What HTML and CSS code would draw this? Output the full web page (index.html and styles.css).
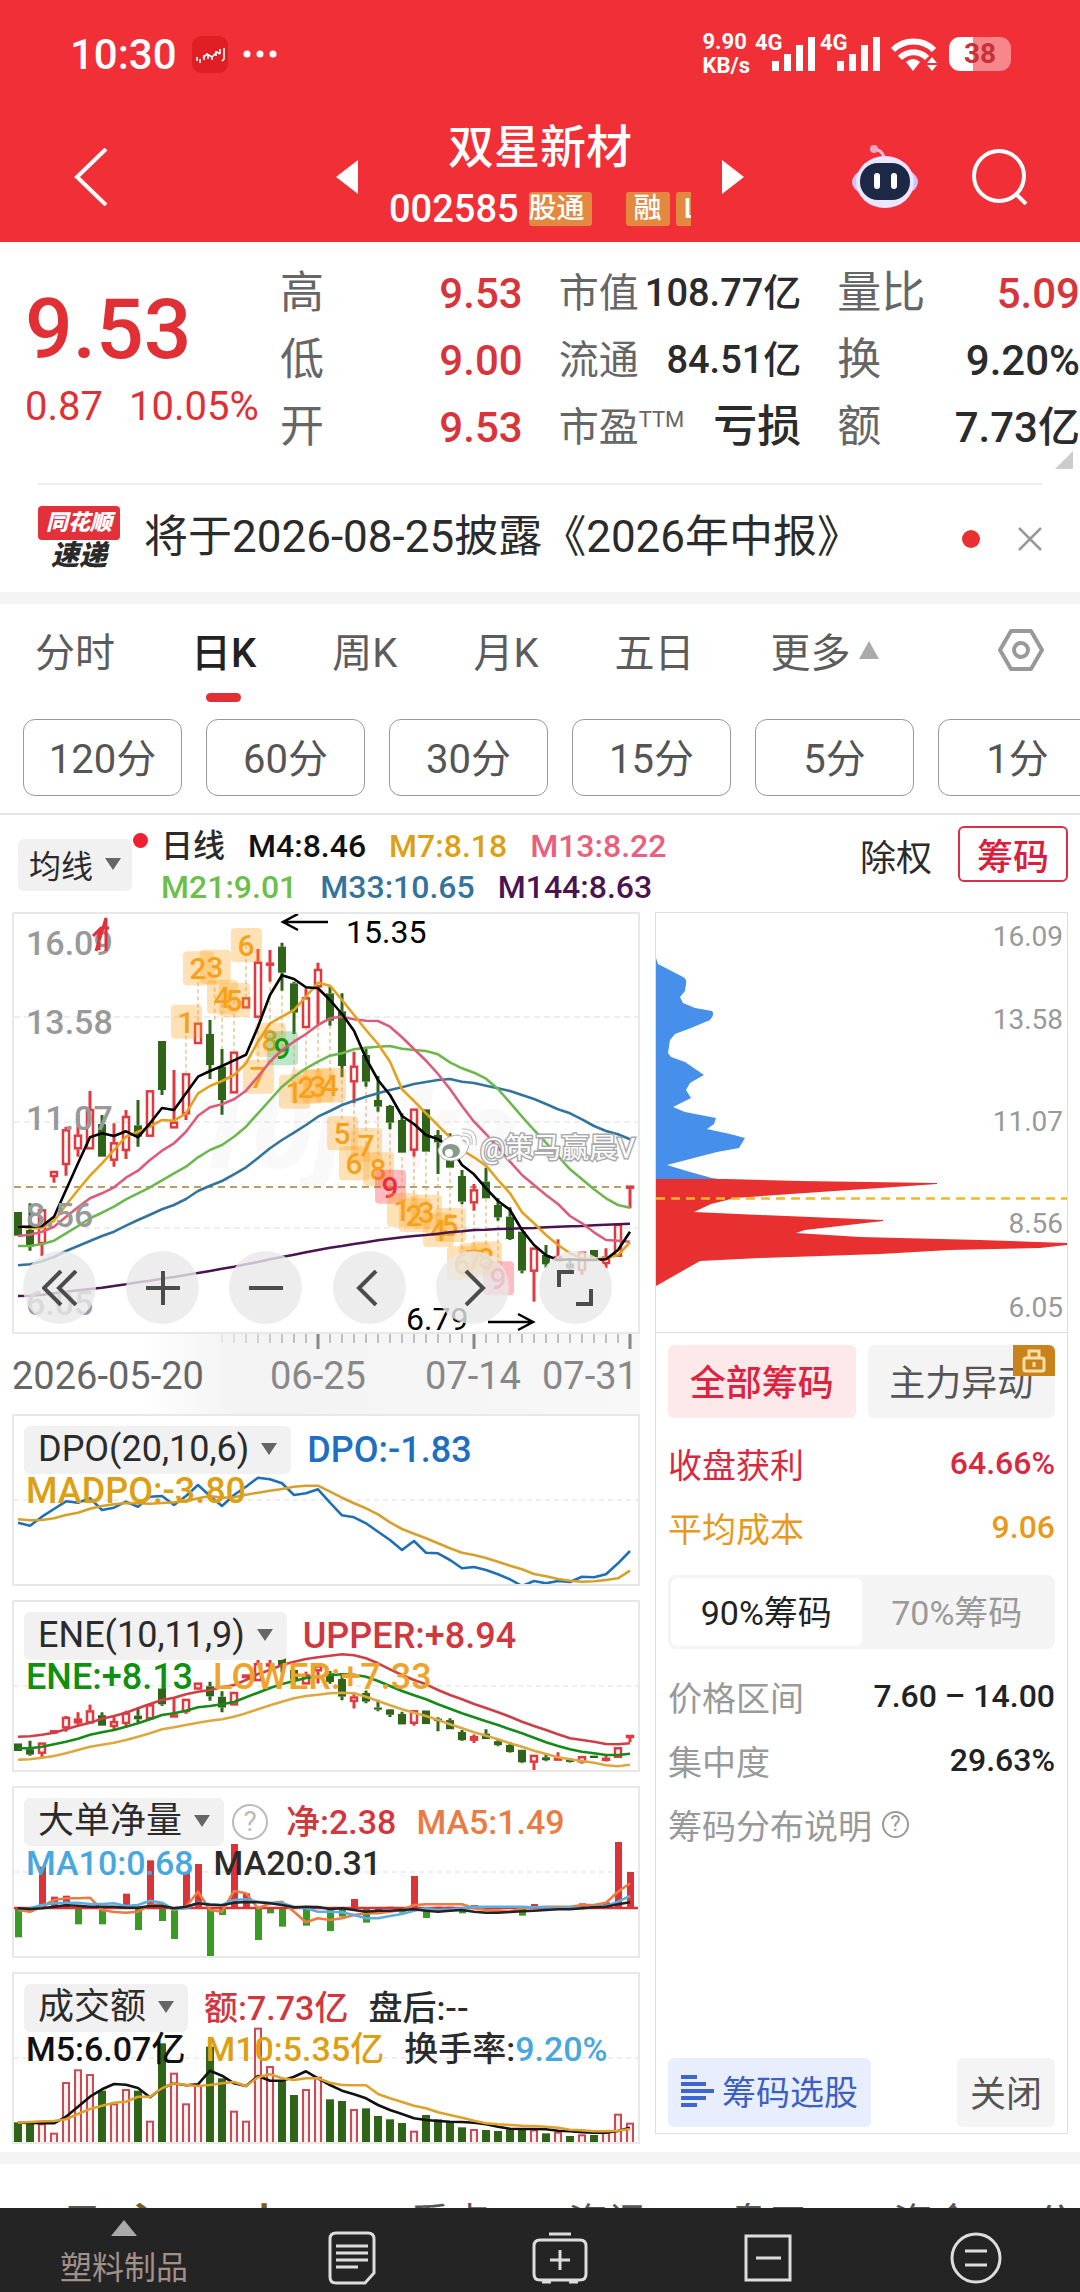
FILE: index.html
```html
<!DOCTYPE html>
<html lang="zh-CN">
<head>
<meta charset="utf-8">
<meta name="viewport" content="width=device-width, initial-scale=1">
<title>双星新材 002585</title>
<link rel="stylesheet" href="styles.css">
</head>
<body>
<header class="top">
  <div class="status">
    <div class="status-side">
      <span class="clock">10:30</span>
      <svg class="app" width="36" height="37" viewBox="0 0 36 37"><rect width="36" height="37" rx="9" fill="#df1f24"/><path d="M5 25v-4M8 27v-4M12 24v-5M16 19v4M20 24v-4M24 20v-5M28 18v-5M32 12v11l-2 2M11 22l4-4 5 3 5-5 3 2" fill="none" stroke="#fff" stroke-width="1.6"/></svg>
      <svg width="34" height="8" viewBox="0 0 34 8" fill="#fff"><circle cx="4" cy="4" r="3.500"/><circle cx="17" cy="4" r="3.500"/><circle cx="30" cy="4" r="3.500"/></svg>
    </div>
    <div class="status-side">
      <span class="speed">9.90<br>KB/s</span>
      <span class="signal"><span>4G</span><svg width="43" height="34" viewBox="0 0 43 34" fill="#fff"><path d="M0 24h7v10H0zM12 17h7v17h-7zM24 8h7v26h-7zM36 0h7v34h-7z"/></svg></span>
      <span class="signal"><span>4G</span><svg width="43" height="34" viewBox="0 0 43 34" fill="#fff"><path d="M0 24h7v10H0zM12 17h7v17h-7zM24 8h7v26h-7zM36 0h7v34h-7z"/></svg></span>
      <svg width="47" height="34" viewBox="0 0 47 34" fill="none" stroke="#fff" stroke-width="6"><path d="M2 13a29 29 0 0 1 41 0M9 21a19 19 0 0 1 27 0"/><path d="M15 25q7-6 14 0l-7 9z" fill="#fff" stroke="none"/><path d="M36 26l5-6 5 6zM36 28l5 6 5-6z" fill="#fff" stroke="none"/></svg>
      <span class="battery">38</span>
    </div>
  </div>
  <div class="titlebar">
    <button class="plain back" aria-label="返回"><svg width="34" height="58" viewBox="0 0 34 58" fill="none" stroke="#fff" stroke-width="4"><path d="M32 1L3 29l29 28"/></svg></button>
    <div class="stock">
      <button class="plain" aria-label="上一只"><svg width="22" height="34" viewBox="0 0 22 34"><path d="M22 0v34L0 17z" fill="#fff"/></svg></button>
      <div class="stock-mid">
        <h1>双星新材</h1>
        <div class="code"><span>002585</span><span class="marks"><b>股通</b><b class="apart">融</b><b>L1</b></span></div>
      </div>
      <button class="plain" aria-label="下一只"><svg width="22" height="34" viewBox="0 0 22 34"><path d="M0 0v34l22-17z" fill="#fff"/></svg></button>
    </div>
    <div class="tools">
      <button class="plain" aria-label="助手"><svg width="68" height="64" viewBox="0 0 68 64"><path d="M33 12Q31 5 23 4" fill="none" stroke="#f3b8d4" stroke-width="3"/><circle cx="23" cy="4" r="4" fill="#f0a8c4"/><ellipse cx="34" cy="37" rx="33" ry="17" fill="#cfc4f8"/><ellipse cx="34" cy="37" rx="29" ry="26" fill="#ece6ff"/><rect x="9" y="18" width="50" height="37" rx="18" fill="#1d2846"/><path d="M26 31v10M43 31v10" stroke="#fff" stroke-width="6" stroke-linecap="round"/></svg></button>
      <button class="plain" aria-label="搜索"><svg width="56" height="56" viewBox="0 0 56 56" fill="none" stroke="#fff" stroke-width="4"><circle cx="27" cy="27" r="25"/><path d="M44 45l10 10"/></svg></button>
    </div>
  </div>
</header>

<section class="quote">
  <div class="price"><strong>9.53</strong><p><span>0.87</span><span>10.05%</span></p></div>
  <dl>
    <div><dt>高</dt><dd class="red">9.53</dd></div>
    <div><dt>低</dt><dd class="red">9.00</dd></div>
    <div><dt>开</dt><dd class="red">9.53</dd></div>
  </dl>
  <dl class="tight">
    <div><dt>市值</dt><dd>108.77亿</dd></div>
    <div><dt>流通</dt><dd>84.51亿</dd></div>
    <div><dt>市盈<sup>TTM</sup></dt><dd class="strong">亏损</dd></div>
  </dl>
  <dl>
    <div><dt>量比</dt><dd class="red">5.09</dd></div>
    <div><dt>换</dt><dd>9.20%</dd></div>
    <div><dt>额</dt><dd>7.73亿</dd></div>
  </dl>
  <svg class="corner" width="18" height="18" viewBox="0 0 18 18"><path d="M18 0v18H0z" fill="#ccc"/></svg>
</section>

<section class="notice">
  <div class="express"><span class="bubble">同花顺</span><span class="sudi">速递</span></div>
  <a href="#report">将于2026-08-25披露《2026年中报》</a>
  <i class="dot"></i>
  <button class="plain" aria-label="关闭公告"><svg width="24" height="24" viewBox="0 0 24 24" stroke="#999" stroke-width="2.5"><path d="M1 1l22 22M23 1L1 23"/></svg></button>
</section>

<nav class="tabs">
  <button class="plain">分时</button>
  <button class="plain on">日K</button>
  <button class="plain">周K</button>
  <button class="plain">月K</button>
  <button class="plain">五日</button>
  <button class="plain more">更多<svg width="20" height="18" viewBox="0 0 20 18"><path d="M10 0l10 18H0z" fill="#aaa"/></svg></button>
  <button class="plain gear" aria-label="设置"><svg width="46" height="42" viewBox="0 0 46 42" fill="none" stroke="#999" stroke-width="4"><path d="M13 2h20l11 19-11 19H13L2 21z" stroke-linejoin="round"/><circle cx="23" cy="21" r="7"/></svg></button>
</nav>
<div class="periods">
  <button>120分</button><button>60分</button><button>30分</button><button>15分</button><button>5分</button><button>1分</button>
</div>

<section class="legendbar">
  <button class="pick small">均线<svg width="16" height="12" viewBox="0 0 16 12"><path d="M0 0h16L8 12z" fill="#666"/></svg><i class="pip"></i></button>
  <div class="legend">
    <p><span class="c-dark">日线</span><span class="c-black">M4:8.46</span><span class="c-gold">M7:8.18</span><span class="c-pink">M13:8.22</span></p>
    <p><span class="c-lime">M21:9.01</span><span class="c-teal">M33:10.65</span><span class="c-plum">M144:8.63</span></p>
  </div>
  <button class="plain right">除权</button>
  <button class="chip">筹码</button>
</section>

<main class="work">
  <div class="left">
    <div class="kline">
      <svg id="kline" viewBox="14 914 624 418">
        <g fill="#f9f9f9" class="ghost"><text x="190" y="1168">10jqka</text></g>
        <g stroke="#ddd" stroke-dasharray="6 4"><path d="M14 1017H638M14 1122H638M14 1228H638"/></g>
        <path d="M14 1187H638" stroke="#b5a06a" stroke-width="2" stroke-dasharray="7 5"/>
        <g id="kdata"></g>
        <g class="axis"><text x="26" y="955">16.09</text><text x="26" y="1034">13.58</text><text x="26" y="1130">11.07</text><text x="26" y="1227">8.56</text><text x="26" y="1315">6.05</text></g>
        <path d="M96 951L106 918V951M93 936l8-8 8 0M99 930v20" fill="none" stroke="#e0303c" stroke-width="3"/>
        <g class="extreme"><text x="346" y="943">15.35</text><text x="406" y="1330">6.79</text></g>
        <path d="M328 922H283m15-8l-15 8 15 8M488 1322h45m-15-8l15 8-15 8" fill="none" stroke="#000" stroke-width="2.5"/>
        <g fill="#fff"><path d="M438 1150q4-13 18-15 8 0 7 6 7 2 5 8-4 11-17 12-12-1-13-11z" stroke="#aaa"/><ellipse cx="451" cy="1151" rx="9" ry="7" fill="#8a9a8a"/><circle cx="449" cy="1153" r="4"/><path d="M462 1131q14-1 12 14M462 1138q7-1 6 7" fill="none" stroke="#bbb" stroke-width="5"/><path d="M462 1131q14-1 12 14M462 1138q7-1 6 7" fill="none" stroke="#fff" stroke-width="3"/></g>
        <text class="mark" x="480" y="1158">@策马赢晨V</text>
      </svg>
      <div class="float">
        <button aria-label="最左"><svg width="36" height="36" viewBox="0 0 36 36"><path d="M19 1L2 18l17 17M34 1L17 18l17 17"/></svg></button>
        <button aria-label="放大"><svg width="36" height="36" viewBox="0 0 36 36"><path d="M18 1v34M1 18h34"/></svg></button>
        <button aria-label="缩小"><svg width="36" height="36" viewBox="0 0 36 36"><path d="M1 18h34"/></svg></button>
        <button aria-label="左移"><svg width="36" height="36" viewBox="0 0 36 36"><path d="M25 1L8 18l17 17"/></svg></button>
        <button aria-label="右移"><svg width="36" height="36" viewBox="0 0 36 36"><path d="M12 1l17 17-17 17"/></svg></button>
        <button aria-label="全屏"><svg width="36" height="36" viewBox="0 0 36 36"><path d="M2 17V2h15M34 19v15H19"/></svg></button>
      </div>
    </div>
    <div class="dates">
      <svg viewBox="12 1334 628 15"><g id="ticks"></g></svg>
      <p><span>2026-05-20</span><span>06-25</span><span>07-14</span><span>07-31</span></p>
    </div>

    <div class="sub">
      <svg id="dpo" viewBox="14 1416 624 168"></svg>
      <div class="cap">
        <p><button class="pick">DPO(20,10,6)<svg width="16" height="12" viewBox="0 0 16 12"><path d="M0 0h16L8 12z" fill="#666"/></svg></button><span class="c-blue">DPO:-1.83</span></p>
        <p><span class="c-gold">MADPO:-3.80</span></p>
      </div>
    </div>
    <div class="sub">
      <svg id="ene" viewBox="14 1602 624 168"></svg>
      <div class="cap">
        <p><button class="pick">ENE(10,11,9)<svg width="16" height="12" viewBox="0 0 16 12"><path d="M0 0h16L8 12z" fill="#666"/></svg></button><span class="c-red">UPPER:+8.94</span></p>
        <p><span class="c-green">ENE:+8.13</span><span class="c-amber">LOWER:+7.33</span></p>
      </div>
    </div>
    <div class="sub">
      <svg id="net" viewBox="14 1788 624 168"></svg>
      <div class="cap compact">
        <p><button class="pick">大单净量<svg width="16" height="12" viewBox="0 0 16 12"><path d="M0 0h16L8 12z" fill="#666"/></svg></button><i class="help big">?</i><span class="c-red">净:2.38</span><span class="c-orange">MA5:1.49</span></p>
        <p><span class="c-sky">MA10:0.68</span><span class="c-dark">MA20:0.31</span></p>
      </div>
    </div>
    <div class="sub">
      <svg id="vol" viewBox="14 1974 624 168"></svg>
      <div class="cap compact">
        <p><button class="pick">成交额<svg width="16" height="12" viewBox="0 0 16 12"><path d="M0 0h16L8 12z" fill="#666"/></svg></button><span class="c-red">额:7.73亿</span><span class="c-dark">盘后:--</span></p>
        <p><span class="c-black">M5:6.07亿</span><span class="c-gold">M10:5.35亿</span><span class="c-dark">换手率:<span class="c-sky">9.20%</span></span></p>
      </div>
    </div>
  </div>

  <aside class="chips">
    <svg class="dist" viewBox="656 913 411 419">
      <path fill="#468fea" d="M656 958L658 964 683 977Q687 979 686 984L685 991 680 997 683 1003 695 1008 712 1011Q715 1014 710 1020L691 1028 675 1034 670 1040 668 1053 671 1057 685 1062 704 1075 695 1080 690 1083 686 1090 691 1098 673 1107 685 1112 716 1118 714 1124 707 1129 730 1134 745 1138 739 1148 717 1152 667 1165 690 1172 712 1178 726 1180H656z"/>
      <path fill="#e93030" d="M656 1179L726 1179 800 1181 937 1183 937 1184 880 1188 820 1192 735 1198 711 1204 694 1212 760 1215 883 1220 883 1221 805 1230 796 1233 860 1237 980 1240 1067 1243 1067 1245 1040 1248 950 1250 880 1254 760 1258 700 1261 656 1286z"/>
      <path d="M656 1198.500H1067" stroke="#efb82e" stroke-width="2.500" stroke-dasharray="9 6"/>
      <g class="axis2"><text x="1063" y="946">16.09</text><text x="1063" y="1029">13.58</text><text x="1063" y="1131">11.07</text><text x="1063" y="1233">8.56</text><text x="1063" y="1317">6.05</text></g>
    </svg>
    <div class="panel">
      <div class="modes"><button class="on">全部筹码</button><button>主力异动<span class="lock"><svg width="24" height="24" viewBox="0 0 24 24" fill="none" stroke="#ffe0a6" stroke-width="3"><rect x="2" y="9" width="20" height="13" rx="2"/><path d="M7 9V2h10v7M12 13v5"/></svg></span></button></div>
      <p class="row red2"><span>收盘获利</span><b>64.66%</b></p>
      <p class="row gold2"><span>平均成本</span><b>9.06</b></p>
      <div class="switch"><button class="on">90%筹码</button><button>70%筹码</button></div>
      <p class="row"><span>价格区间</span><b>7.60 – 14.00</b></p>
      <p class="row"><span>集中度</span><b>29.63%</b></p>
      <p class="row explain"><span>筹码分布说明</span><i class="help">?</i></p>
      <div class="foot"><button class="select"><svg width="33" height="32" viewBox="0 0 33 32" stroke="#3d66d0" stroke-width="4"><path d="M0 2h16M0 9h25M0 16h33M0 23h25M0 30h16"/></svg>筹码选股</button><button>关闭</button></div>
    </div>
  </aside>
</main>

<div class="peek"><span>云</span><span class="b">主</span><span class="b">小</span><span class="b">B</span><span>看点</span><span>资讯</span><span>盘口</span><span>资金</span><span>公</span></div>

<nav class="bottom">
  <a href="#sector"><svg width="26" height="16" viewBox="0 0 26 16"><path d="M13 0l13 16H0z" fill="#aaa"/></svg><span>塑料制品</span></a>
  <a href="#notes" aria-label="笔记"><svg width="48" height="54" viewBox="0 0 48 54"><path d="M8 2h32q6 0 6 6v34L37 52H8q-6 0-6-6V8q0-6 6-6zM8 15h32M8 22h32M8 29h32M8 36h22"/></svg></a>
  <a href="#add" aria-label="自选"><svg width="56" height="52" viewBox="0 0 56 52"><path d="M17 2h22M8 8h40q6 0 6 6v28q0 6-6 6H8q-6 0-6-6V14q0-6 6-6zM28 18v20M18 28h20M10 50h9M37 50h9"/></svg></a>
  <a href="#less" aria-label="减少"><svg width="48" height="48" viewBox="0 0 48 48"><path d="M2 2h44v44H2zM12 24h25"/></svg></a>
  <a href="#menu" aria-label="菜单"><svg width="52" height="52" viewBox="0 0 52 52"><circle cx="26" cy="26" r="24"/><path d="M15 19h22M15 33h22"/></svg></a>
</nav>
<script src="charts.js"></script>
</body>
</html>
```
FILE: styles.css
```css
* { box-sizing: border-box; }
body { margin: 0; background: #fff; color: #2b2b2b; font-family: Roboto, "Noto Sans CJK SC", sans-serif; font-size: 36px; }
p, h1, dl, dd { margin: 0; }
svg { display: block; flex: none; }
button { font: inherit; color: inherit; padding: 0; border: 0; cursor: pointer; white-space: nowrap; }
a { color: inherit; text-decoration: none; }
i { font-style: normal; }
.plain { background: none; }

.top { background: #f12f37; color: #fff; padding-bottom: 3px; }
.status { display: flex; justify-content: space-between; height: 115px; padding: 33px 69px 0 70px; }
.status-side { display: flex; gap: 15px; height: 42px; align-items: center; }
.status-side:last-child { gap: 11px; }
.clock { font-size: 42px; font-weight: 500; }
.speed { font-size: 22px; font-weight: 700; line-height: 24px; }
.signal { position: relative; padding-left: 13px; margin-left: -2px; }
.signal span { position: absolute; left: -4px; top: -5px; font-size: 22px; font-weight: 700; line-height: 22px; }
.battery { width: 62px; height: 34px; border-radius: 11px; background: linear-gradient(90deg, #fff 38%, #f8878c 38%); color: #c9303a; font-size: 28px; font-weight: 700; line-height: 34px; text-align: center; }
.titlebar { display: grid; grid-template-columns: 1fr auto 1fr; align-items: center; padding: 0 52px; }
.back { justify-self: start; margin-left: 22px; }
.stock { display: flex; align-items: center; gap: 31px; }
.stock-mid { width: 302px; }
h1 { font-size: 46px; font-weight: 500; line-height: 64px; text-align: center; }
.code { display: flex; gap: 10px; align-items: center; line-height: 60px; font-size: 38px; font-weight: 500; }
.marks { display: flex; flex: 1; gap: 6px; overflow: hidden; }
.marks b { flex: none; background: #e2893f; font-size: 28px; font-weight: 500; line-height: 34px; padding: 0 7px 0 0; border-radius: 3px; }
.marks b + b { padding: 0 8px; }
.marks .apart { margin-left: 28px; }
.tools { display: flex; justify-self: end; gap: 53px; align-items: center; }

.quote { position: relative; display: grid; grid-template-columns: 219px 1fr 1fr 1fr; column-gap: 36px; padding: 18px 0 22px 25px; }
.price { color: #e03035; white-space: nowrap; }
.price strong { display: block; font-size: 84px; font-weight: 500; line-height: 100px; padding-top: 20px; }
.price p { display: flex; gap: 26px; font-size: 40px; line-height: 54px; }
.quote dl { font-size: 42px; line-height: 67px; white-space: nowrap; }
.quote dl div { display: flex; justify-content: space-between; height: 67px; }
.quote dt { color: #666; font-size: 44px; }
.quote .tight { font-size: 38px; }
.quote .tight dt { font-size: 40px; }
.quote .strong { font-size: 44px; font-weight: 500; }
.quote sup { font-size: 22px; line-height: 0; vertical-align: 14px; }
.quote dd { font-weight: 500; }
.red { color: #d8343b; }
.corner { position: absolute; right: 7px; bottom: 14px; }

.notice { display: flex; align-items: center; margin: 0 38px; border-top: 2px solid #eee; height: 109px; font-size: 44px; }
.notice a { flex: 1; margin-left: 24px; line-height: 56px; padding-bottom: 4px; white-space: nowrap; }
.dot { width: 18px; height: 18px; border-radius: 9px; background: #e93030; margin-right: 38px; }
.express { width: 82px; text-align: center; font-weight: 900; font-style: italic; line-height: 28px; }
.express span { display: block; }
.bubble { background: #e2313a; color: #fff; font-size: 22px; line-height: 34px; border-radius: 4px; }
.sudi { font-size: 28px; line-height: 32px; }

.tabs { display: flex; align-items: center; gap: 76px; height: 115px; padding: 0 36px 12px 35px; border-top: 12px solid #f4f4f4; font-size: 40px; color: #5c5c5c; }
.tabs .on { position: relative; color: #222; font-weight: 500; }
.tabs .on::after { content: ""; position: absolute; left: 15px; right: 15px; bottom: -23px; height: 9px; border-radius: 5px; background: #e03035; }
.more { display: flex; align-items: center; gap: 8px; }
.gear { margin-left: auto; }
.periods { display: flex; gap: 24px; padding: 12px 0 17px 23px; overflow: hidden; border-bottom: 2px solid #e5e5e5; }
.periods button { flex: none; width: 159px; height: 77px; padding-bottom: 3px; border: 1px solid #999; border-radius: 12px; background: #fff; font-size: 40px; color: #555; }

.legendbar { display: flex; align-items: flex-start; height: 97px; padding: 11px 12px 0 18px; }
.pick { display: inline-flex; align-items: center; gap: 12px; height: 48px; padding: 0 14px 2px; border-radius: 6px; background: #f1f1f1; color: #2b2b2b; font-size: 36px; }
.pick.small { position: relative; height: 52px; margin-top: 13px; padding: 0 11px 2px; font-size: 32px; }
.pip { position: absolute; right: -16px; top: -6px; width: 15px; height: 15px; border-radius: 8px; background: #f02030; }
.legend { flex: 1; margin-left: 29px; font-size: 32px; line-height: 41px; }
.legend p { display: flex; gap: 23px; white-space: nowrap; }
.legend span { font-weight: 500; }
.right { margin: 3px 26px 0 0; }
.chip { width: 110px; height: 56px; padding-bottom: 3px; border: 2px solid #d8304a; border-radius: 6px; background: #fff; color: #d8203c; font-weight: 500; }

.work { display: grid; grid-template-columns: 628fr 413fr; gap: 15px; padding: 0 12px 8px; }
.left svg[viewBox^="1"] { width: 100%; }
.kline { position: relative; border: 2px solid #e8e8e8; }
.axis, .axis2, .extreme, .mark, .tags text, .ghost { font-family: Roboto, "Noto Sans CJK SC", sans-serif; }
.axis { font-size: 34px; fill: #999; font-weight: 500; }
.axis2 { font-size: 28px; fill: #999; text-anchor: end; }
.extreme { font-size: 32px; fill: #000; }
.ghost { font-size: 110px; font-weight: 900; font-style: italic; }
.mark { font-size: 28px; fill: #fff; paint-order: stroke; stroke: #aaa; stroke-width: 3px; }
.tags text { font-size: 30px; font-weight: 500; text-anchor: middle; }
.float { position: absolute; left: 9px; right: 26px; bottom: 8px; display: flex; justify-content: space-between; }
.float button { width: 73px; height: 73px; border-radius: 37px; display: grid; place-items: center; background: rgba(232, 232, 232, .8); }
.float svg { fill: none; stroke: #4c4c4c; stroke-width: 4; }
.dates { height: 80px; background: linear-gradient(90deg, #fff 20%, #f3f3f3 36%, #f8f8f8); }
.dates p { display: grid; grid-template-columns: 258fr 155fr 117fr 98fr; font-size: 38px; line-height: 54px; color: #888; white-space: nowrap; }
.dates span:first-child { color: #666; }
.sub { display: grid; border: 2px solid #e8e8e8; }
.sub + .sub { margin-top: 14px; }
.sub > * { grid-area: 1 / 1; }
.cap { padding: 9px 10px 0; font-size: 36px; }
.cap p { display: flex; align-items: center; gap: 20px; line-height: 50px; height: 50px; white-space: nowrap; }
.cap p + p { padding-left: 2px; height: 32px; line-height: 32px; }
.cap.compact { font-size: 34px; }
.cap span { font-weight: 500; }
.cap .pick { margin-right: -4px; }
.help { display: inline-grid; flex: none; place-items: center; width: 27px; height: 27px; border: 2px solid #999; border-radius: 50%; color: #999; font-size: 22px; line-height: 22px; }
.help.big { width: 36px; height: 36px; border-color: #bbb; color: #bbb; font-size: 28px; margin: 0 -2px 0 -8px; }

.chips { display: flex; flex-direction: column; border: 1px solid #ddd; margin-bottom: 10px; }
.dist { width: 100%; border-bottom: 1px solid #ddd; }
.panel { flex: 1; display: flex; flex-direction: column; padding: 12px 12px 6px; }
.panel button { padding-bottom: 4px; border-radius: 6px; background: #f4f4f4; color: #555; }
.modes { display: flex; gap: 12px; margin-bottom: 13px; }
.modes button { position: relative; flex: 1; height: 73px; }
.modes .on { background: #fde8ea; color: #dc2440; font-weight: 500; }
.lock { position: absolute; right: 0; top: 0; width: 42px; height: 31px; border-radius: 0 6px 0 0; background: #c9821c; display: grid; place-items: center; }
.row { display: flex; align-items: center; justify-content: space-between; height: 64px; font-size: 34px; color: #999; white-space: nowrap; }
.row b { font-size: 32px; font-weight: 500; color: #222; }
.row.explain { justify-content: flex-start; gap: 10px; }
.red2, .red2 b { color: #d92840; }
.gold2, .gold2 b { color: #e8991c; }
.panel .switch { display: flex; height: 74px; margin: 16px 0 15px; padding: 3px; background: #f4f4f4; border-radius: 8px; font-size: 34px; }
.switch button { flex: 1; color: #999; }
.panel .switch .on { background: #fff; color: #222; }
.foot { display: flex; justify-content: space-between; margin-top: auto; }
.foot button { height: 69px; padding: 0 13px 4px; }
.foot .select { display: flex; align-items: center; gap: 8px; background: #e8eefd; color: #3d5fc4; font-size: 34px; }

.peek { display: grid; grid-template-columns: 60fr 122fr 59fr 107fr 158fr 160fr 165fr 142fr 45fr; height: 56px; padding: 38px 0 0 62px; overflow: hidden; border-top: 12px solid #f4f4f4; font-size: 40px; line-height: 44px; color: #555; white-space: nowrap; }
.peek .b { color: #7a5a20; font-weight: 700; }

.bottom { display: grid; grid-template-columns: 248fr 208fr 208fr 208fr 208fr; height: 85px; background: #242424; color: #a09088; font-size: 32px; overflow: hidden; }
.bottom a { display: flex; flex-direction: column; align-items: center; justify-content: center; padding-top: 14px; }
.bottom a:first-child { justify-content: flex-start; padding-top: 12px; }
.bottom a:first-child span { line-height: 40px; margin-top: 12px; }
.bottom a:not(:first-child) svg { fill: none; stroke: #ddd; stroke-width: 3; }

.c-black { color: #111; } .c-dark { color: #2b2b2b; } .c-gold { color: #dd9f14; } .c-pink { color: #e8607c; }
.c-lime { color: #6cc04a; } .c-teal { color: #34749c; } .c-plum { color: #4a1450; } .c-blue { color: #1f6fc0; }
.c-red { color: #d0383f; } .c-green { color: #0f9010; } .c-amber { color: #eea42c; } .c-orange { color: #ea7b44; } .c-sky { color: #48a8de; }
```
FILE: charts.js
```js
// One column per trading day. Prices are stored as chart heights in thirds of a unit.
const RED = '#e0393f', GREEN = '#2f6419';
const X = i => 18 + 12 * i;

// up/down, high, low, body top, body bottom
const candles = [
  [0,936,1007,936,1007],[0,910,1052,990,1040],[1,928,1068,928,1032],[1,813,848,813,831],[1,680,827,688,795],
  [1,645,770,704,748],[1,573,748,627,748],[0,645,770,672,770],[1,670,800,727,782],[1,630,777,648,753],
  [0,600,740,676,710],[1,571,710,571,710],[0,423,585,423,570],[1,510,685,665,685],[1,520,660,520,643],
  [1,368,432,368,432],[0,360,537,402,495],[0,447,644,500,600],[1,455,580,455,580],[1,292,325,292,325],
  [1,147,353,185,353],[1,150,245,188,196],[0,128,272,140,218],[0,245,402,250,338],[1,265,384,292,384],
  [1,188,375,207,262],[0,260,377,280,362],[0,280,532,334,498],[1,455,610,497,547],[0,440,560,465,545],
  [0,528,635,600,620],[0,615,688,618,668],[0,640,758,660,758],[1,626,770,626,752],[0,628,755,628,755],
  [0,690,822,705,727],[0,700,803,718,803],[0,810,913,828,905],[1,852,932,868,910],[0,803,895,845,895],
  [0,895,962,915,952],[0,922,1020,950,1017],[0,995,1120,995,1112],[1,1043,1205,1043,1115],[0,1035,1103,1065,1093],
  [1,1018,1083,1068,1083],[0,1075,1113,1090,1105],[1,1055,1125,1055,1113],[0,1050,1072,1050,1072],[1,1045,1105,1070,1092],
  [1,972,1070,972,1070],[1,857,925,857,861]
];

const ma = {
  '#4a1450': [1188,1187,1184,1180,1175,1171,1167,1163,1158,1153,1147,1142,1136,1131,1125,1119,1113,1106,1100,1093,1086,1078,1071,1064,1057,1050,1043,1038,1032,1027,1021,1016,1012,1008,1005,1001,997,994,990,989,987,986,985,984,982,980,979,978,976,974,973,971],
  '#34749c': [1096,1093,1084,1071,1053,1038,1023,1008,995,977,960,944,928,915,897,873,857,843,823,802,774,745,720,698,675,650,633,615,602,590,580,570,562,552,546,540,537,545,549,557,565,573,585,597,612,628,640,658,678,693,703,718],
  '#6cb84e': [1038,1038,1032,1022,1000,978,955,938,920,898,880,862,841,820,800,772,750,735,710,680,640,600,560,530,505,485,467,460,448,443,440,438,446,450,453,463,487,505,518,536,567,608,650,690,728,768,808,838,868,895,915,923],
  '#dc5c7c': [1008,1004,995,980,950,922,895,880,862,833,812,780,752,730,695,647,622,613,598,572,530,485,450,425,402,375,355,350,358,362,363,380,412,447,482,522,567,618,665,702,742,785,825,855,885,912,948,970,997,1020,1022,1025],
  '#e6a11c': [978,985,985,962,915,870,827,790,750,710,695,680,660,662,640,580,558,543,525,490,425,370,350,330,290,248,257,300,345,390,432,485,568,603,640,676,712,750,772,797,840,880,937,970,1005,1035,1060,1075,1078,1075,1065,1027],
  '#000': [980,980,978,950,870,790,712,700,708,694,712,670,624,630,580,530,513,498,481,464,380,285,226,237,262,265,300,342,392,475,540,585,648,672,705,718,740,795,823,865,903,930,990,1035,1066,1080,1078,1080,1080,1078,1050,995]
};

// day, height, digit, kind
const tags = [
  [14,365,1],[15,205,2],[16.4,200,3],[17,290,4],[18,300,5],[19,135,6],[20,530,7],[21,420,8],[22,445,9,'g'],
  [23,575,1],[24,560,2],[25,558,3],[26,555,4],[27,700,5],[28,790,6],[29,735,7],[30,808,8],[31,860,9,'r'],
  [32,930,1],[33,945,2],[34,935,3],[35,990,4],[36,975,5],[37,1090,6],[38,1080,7],[39,1075,8],[40,1135,9,'r']
];
const tagStyle = { o: ['#ffa51f', '#f5a11c'], g: ['#3cb054', '#0f9a10'], r: ['#ff3040', '#ea2c3c'] };

const dpo = {
  '#1f6fb4': [578,587,560,537,514,518,505,540,533,515,530,500,498,525,498,465,498,528,495,470,443,448,460,495,490,478,518,556,562,580,605,630,660,633,668,670,690,715,711,720,733,748,768,753,760,753,756,740,742,733,700,663],
  '#d6a02c': [568,571,570,565,555,548,536,528,523,519,520,521,519,517,514,505,498,503,502,494,488,482,477,470,467,467,485,503,520,535,553,577,597,611,625,640,655,668,675,684,695,707,718,732,739,747,752,755,754,750,745,722]
};
const ene = {
  '#cc4048': [440,439,434,428,418,407,398,386,378,368,355,342,330,323,313,305,300,292,285,270,252,240,225,215,207,202,197,193,196,205,220,238,255,270,283,300,315,328,342,354,367,380,395,408,420,433,445,450,455,462,463,460],
  '#148a18': [475,475,470,463,455,446,434,427,420,410,400,388,375,370,362,352,348,343,336,322,308,294,282,273,264,260,256,253,254,260,273,288,303,316,328,343,356,370,382,394,405,418,430,443,457,468,478,485,490,495,495,491],
  '#dca840': [509,508,503,498,490,480,470,464,458,450,440,430,418,412,405,398,392,388,380,370,358,346,335,325,318,314,310,308,310,320,333,346,358,368,378,390,403,415,427,437,448,460,470,482,492,502,508,513,518,526,529,524]
};
const netBars = [1042,965,830,920,917,1003,950,1003,950,911,1020,811,993,1047,850,822,1104,975,762,910,1050,970,1010,950,1007,950,1023,980,927,998,965,950,968,858,984,950,950,970,945,952,958,952,977,942,952,952,952,940,950,937,756,846];
const net = {
  '#ea7b44': [960,965,950,930,925,925,923,960,966,968,965,945,942,960,950,905,960,965,903,910,955,940,935,965,997,985,990,985,975,970,970,965,960,945,943,943,943,943,955,960,962,965,955,952,950,950,950,945,945,938,905,880],
  '#5aaee4': [958,955,945,940,938,938,942,942,940,948,945,932,938,958,955,938,942,945,930,928,935,938,940,950,955,965,965,967,975,985,985,978,972,962,955,960,958,955,950,950,950,950,950,952,952,955,952,955,950,948,935,918],
  '#222': [955,957,955,950,946,947,950,950,950,953,953,948,948,955,950,940,944,946,938,936,937,940,945,952,950,951,957,955,960,965,962,962,960,958,962,965,962,960,965,968,968,966,964,962,960,958,958,955,952,950,943,937]
};
const volBars = [487,490,490,518,366,328,342,392,430,387,392,482,250,338,430,375,260,355,452,482,203,318,362,405,387,350,418,423,447,445,468,478,489,512,465,478,485,502,507,510,513,508,508,508,520,515,528,523,525,515,461,488];
const vol = {
  '#111': [488,489,490,490,470,440,410,388,372,374,384,412,385,370,376,373,332,347,370,378,348,362,362,350,334,355,375,392,403,415,435,450,462,475,480,483,485,486,488,493,500,506,507,507,508,512,514,517,518,518,513,503],
  '#e0a02c': [488,486,484,483,478,462,447,437,428,425,410,410,385,370,375,378,375,370,366,378,352,343,355,360,355,355,368,375,376,376,402,415,426,437,445,457,465,473,482,490,493,495,497,498,500,503,509,511,514,514,512,507]
};

const lines = (set, top) => Object.entries(set).map(([color, ys]) =>
  `<polyline fill="none" stroke="${color}" stroke-width="2.6" stroke-linejoin="round" points="${ys.map((v, i) => X(i) + ',' + (top + v / 3).toFixed(1)).join(' ')}"/>`).join('');

const drawCandles = y => candles.map(([up, hi, lo, a, b], i) => {
  const x = X(i), top = y(a), h = Math.max(y(b) - top, 2), c = up ? RED : GREEN;
  const body = up
    ? `<rect x="${x - 3}" y="${top + 1}" width="6" height="${Math.max(h - 2, 1)}" fill="${h < 5 ? RED : 'none'}" stroke="${RED}" stroke-width="2.5"/>`
    : `<rect x="${x - 4}" y="${top}" width="8" height="${h}" fill="${GREEN}"/>`;
  return `<path d="M${x} ${y(hi)}V${top}M${x} ${top + h}V${y(lo)}" stroke="${c}" stroke-width="3"/>${body}`;
}).join('');

const grid = y => `<path d="M14 ${y}H638" stroke="#ddd" stroke-dasharray="5 4"/>`;
const put = (id, html) => { document.getElementById(id).innerHTML = html; };

const drawTags = tags.map(([i, v, n, kind = 'o']) => {
  const x = X(i), y = 900 + v / 3, k = candles[Math.floor(i)], [bg, fg] = tagStyle[kind];
  const end = 900 + (v < k[1] ? k[1] : k[2]) / 3;
  return `<path d="M${x} ${y}V${end}" stroke="#dba65c" stroke-dasharray="4 3"/>` +
    `<rect x="${x - 15}" y="${y - 17}" width="31" height="34" rx="4" fill="${bg}" fill-opacity=".33"/>` +
    `<text x="${x}" y="${y + 11}" fill="${fg}">${n}</text>`;
}).join('');

put('kdata', drawCandles(v => 900 + v / 3) + `<g class="tags">${drawTags}</g>` + lines(ma, 900));

put('ticks', Array.from({ length: 35 }, (_, k) => {
  const i = 17 + k, major = [25, 38, 51].includes(i);
  return `<path d="M${X(i)} 1334v${major ? 15 : 9}" stroke="#888" stroke-width="${major ? 3 : 1}" opacity="${Math.min(1, (k + 2) / 8)}"/>`;
}).join(''));

put('dpo', grid(1500) + lines(dpo, 1330));
put('ene', grid(1686) + drawCandles(v => 1657 + (v - 128) * 0.107) + lines(ene, 1590));
put('net', grid(1872) +
  netBars.map((v, i) => {
    const y = 1590 + v / 3, down = v > 958 && i !== 1;
    return `<rect x="${X(i) - 3}" y="${Math.min(y, 1908)}" width="7" height="${Math.abs(y - 1908)}" fill="${down ? '#3a9a22' : '#dc3338'}"/>`;
  }).join('') + '<path d="M14 1908H638" stroke="#dc3338" stroke-width="2.5"/>' + lines(net, 1590));
put('vol', grid(2058) +
  volBars.map((v, i) => {
    const y = 1960 + v / 3;
    return candles[i][0]
      ? `<rect x="${X(i) - 3}" y="${y + 1}" width="6" height="${2142 - y}" fill="#fff0f0" stroke="#cc4a54" stroke-width="2"/>`
      : `<rect x="${X(i) - 4}" y="${y}" width="8" height="${2144 - y}" fill="${GREEN}"/>`;
  }).join('') + lines(vol, 1960));
```
